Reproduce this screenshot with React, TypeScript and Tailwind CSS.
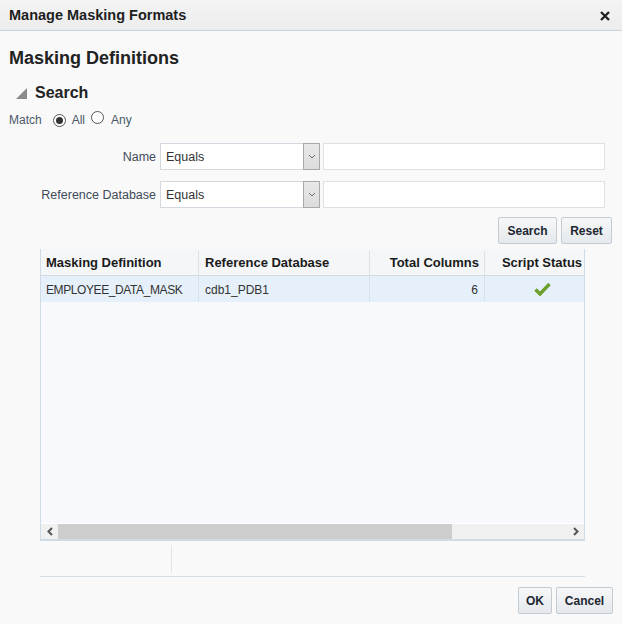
import React from "react";

const Radio = ({ checked }: { checked?: boolean }) => (
  <span className="inline-flex h-[13px] w-[13px] items-center justify-center rounded-full border border-[#555] bg-white">
    {checked && <span className="h-[7px] w-[7px] rounded-full bg-[#333]" />}
  </span>
);

const Btn = ({ label, w }: { label: string; w: string }) => (
  <button
    className={`flex h-[27px] ${w} items-center justify-center rounded-[2px] border border-[#c3cbd3] bg-gradient-to-b from-[#f6f7f8] to-[#e5e9ed] pt-[1px] text-[12px] font-bold text-[#1d2631]`}
  >
    {label}
  </button>
);

const Select = () => (
  <div className="flex h-[27px] w-[160px]">
    <div className="flex flex-1 items-center border border-r-0 border-[#d3d9df] bg-white pl-[5px] pt-[1px] text-[12.5px] text-[#333]">
      Equals
    </div>
    <div className="flex w-[17px] items-center justify-center border border-[#a9a9a9] bg-gradient-to-b from-[#e9e9e9] to-[#dcdcdc]">
      <svg width="8" height="5" viewBox="0 0 8 5">
        <polyline points="1,1 4,4 7,1" fill="none" stroke="#6b6b6b" strokeWidth="1" />
      </svg>
    </div>
  </div>
);

export default function App() {
  return (
    <div className="flex h-[624px] w-[622px] flex-col bg-[#f9f9f9] font-['Liberation_Sans',Arial,sans-serif] text-[#333]">
      {/* Header */}
      <div className="flex h-[31px] shrink-0 items-center justify-between border-b border-[#c9d3dc] bg-gradient-to-b from-[#f4f4f4] to-[#ececec] pl-[9px] pr-[12px] pt-[1px]">
        <span className="text-[14.5px] font-bold text-[#1e1e1e]">Manage Masking Formats</span>
        <svg width="10" height="10" viewBox="0 0 10 10">
          <path d="M1 1 L9 9 M9 1 L1 9" stroke="#222" strokeWidth="2.4" />
        </svg>
      </div>

      {/* Title */}
      <div className="mt-[16px] h-[22px] pl-[9px] text-[18px] font-bold leading-[22px] text-[#222]">
        Masking Definitions
      </div>

      {/* Search */}
      <div className="mt-[14px] flex h-[20px] items-center pl-[16px]">
        <svg width="11" height="11" viewBox="0 0 11 11">
          <polygon points="11,0 11,11 0,11" fill="#8c8c8c" />
        </svg>
        <span className="ml-[8px] text-[16px] font-bold leading-[20px] text-[#222]">Search</span>
      </div>

      {/* Match */}
      <div className="mt-[9px] flex h-[16px] items-center pl-[9px] text-[12px] text-[#4b5868]">
        <span>Match</span>
        <span className="ml-[11px]"><Radio checked /></span>
        <span className="ml-[6px]">All</span>
        <span className="ml-[6px]"><Radio /></span>
        <span className="ml-[7px]">Any</span>
      </div>

      {/* Form rows */}
      <div className="mt-[15px] flex h-[27px] items-center pl-[9px]">
        <div className="w-[147px] pt-[1px] text-right text-[12.5px] text-[#3f4b5a]">Name</div>
        <div className="ml-[4px]"><Select /></div>
        <div className="ml-[3px] h-[27px] w-[282px] border border-[#dce1e6] bg-white" />
      </div>
      <div className="mt-[11px] flex h-[27px] items-center pl-[9px]">
        <div className="w-[147px] pt-[1px] text-right text-[12.5px] text-[#3f4b5a]">Reference Database</div>
        <div className="ml-[4px]"><Select /></div>
        <div className="ml-[3px] h-[27px] w-[282px] border border-[#dce1e6] bg-white" />
      </div>

      {/* Search buttons */}
      <div className="mt-[9px] flex justify-end gap-[4px] pr-[10px]">
        <Btn label="Search" w="w-[59px]" />
        <Btn label="Reset" w="w-[51px]" />
      </div>

      {/* Table */}
      <div className="ml-[40px] mt-[5px] flex h-[292px] w-[545px] flex-col border-x border-b-2 border-[#cfdbe5] bg-[#f7f9fc]">
        <div className="flex-1 overflow-hidden">
          <div className="flex h-[27px] w-[720px] border-b border-[#d3dce4] bg-[#f4f6f8] pt-[2px] text-[13px] font-bold text-[#1a1a1a]">
            <div className="flex w-[158px] items-center border-r border-[#dbe2e8] pl-[5px]">Masking Definition</div>
            <div className="flex w-[171px] items-center border-r border-[#dbe2e8] pl-[6px]">Reference Database</div>
            <div className="flex w-[115px] items-center justify-end border-r border-[#dbe2e8] pr-[5px]">Total Columns</div>
            <div className="flex w-[115px] items-center justify-center whitespace-nowrap border-r border-[#dbe2e8]">Script Status</div>
          </div>
          <div className="flex h-[26px] w-[720px] bg-[#e5f0fa] text-[12px] text-[#333]">
            <div className="flex w-[158px] items-center border-r border-[#d6e2ec] pl-[5px] pt-[1px] tracking-[-0.4px]">EMPLOYEE_DATA_MASK</div>
            <div className="flex w-[171px] items-center border-r border-[#d6e2ec] pl-[6px] pt-[1px]">cdb1_PDB1</div>
            <div className="flex w-[115px] items-center justify-end border-r border-[#d6e2ec] pr-[6px] pt-[1px]">6</div>
            <div className="flex w-[115px] items-center justify-center">
              <svg width="17" height="14" viewBox="0 0 17 14">
                <path d="M1.5 7.5 L6 12 L15.5 2" fill="none" stroke="#6b9e2a" strokeWidth="3.4" strokeLinejoin="miter" />
              </svg>
            </div>
          </div>
        </div>
        <div className="h-[1px] bg-white" />
        <div className="flex h-[15px] bg-[#f0f0f0]">
          <div className="flex w-[17px] items-center justify-center">
            <svg width="6" height="9" viewBox="0 0 6 9">
              <polyline points="5,1 1.5,4.5 5,8" fill="none" stroke="#555" strokeWidth="2" />
            </svg>
          </div>
          <div className="w-[394px] bg-[#cdcdcd]" />
          <div className="flex-1" />
          <div className="flex w-[17px] items-center justify-center">
            <svg width="6" height="9" viewBox="0 0 6 9">
              <polyline points="1,1 4.5,4.5 1,8" fill="none" stroke="#555" strokeWidth="2" />
            </svg>
          </div>
        </div>
      </div>

      {/* Footer dividers */}
      <div className="ml-[40px] mt-[4px] flex h-[28px] w-[545px]">
        <div className="w-[132px] border-r border-[#dfe5eb]" />
      </div>
      <div className="ml-[40px] mt-[3px] w-[545px] border-t border-[#d6dee6]" />

      {/* Bottom buttons */}
      <div className="mt-[10px] flex justify-end gap-[4px] pr-[9px]">
        <Btn label="OK" w="w-[34px]" />
        <Btn label="Cancel" w="w-[57px]" />
      </div>
    </div>
  );
}
